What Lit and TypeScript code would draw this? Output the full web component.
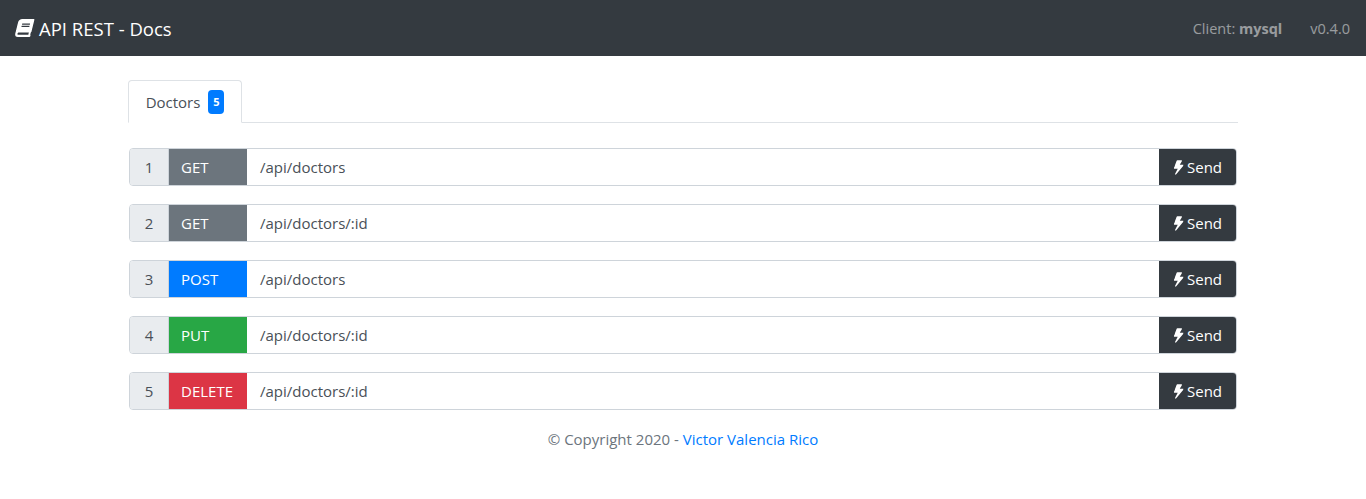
import { LitElement, css, html } from "lit";
import { customElement } from "lit/decorators.js";

const ENDPOINTS = [
  { method: "GET", path: "/api/doctors", color: "get" },
  { method: "GET", path: "/api/doctors/:id", color: "get" },
  { method: "POST", path: "/api/doctors", color: "post" },
  { method: "PUT", path: "/api/doctors/:id", color: "put" },
  { method: "DELETE", path: "/api/doctors/:id", color: "delete" },
];

const bookIcon = html`<svg class="book" viewBox="0 0 448 512" fill="currentColor">
  <path d="M448 360V24c0-13.3-10.7-24-24-24H96C43 0 0 43 0 96v320c0 53 43 96 96 96h328c13.3 0 24-10.7 24-24v-16c0-7.5-3.5-14.3-8.9-18.7-4.2-15.4-4.2-59.3 0-74.7 5.4-4.3 8.9-11.1 8.9-18.6zM128 134c0-3.3 2.7-6 6-6h212c3.3 0 6 2.7 6 6v20c0 3.3-2.7 6-6 6H134c-3.3 0-6-2.7-6-6v-20zm0 64c0-3.3 2.7-6 6-6h212c3.3 0 6 2.7 6 6v20c0 3.3-2.7 6-6 6H134c-3.3 0-6-2.7-6-6v-20zm253.4 250H96c-17.7 0-32-14.3-32-32 0-17.6 14.4-32 32-32h285.4c-1.9 17.1-1.9 46.9 0 64z"></path>
</svg>`;

const boltIcon = html`<svg class="bolt" viewBox="0 0 320 512" fill="currentColor">
  <path d="M296 160H180.6l42.6-129.8C227.2 15 215.7 0 200 0H56C44 0 33.8 8.9 32.2 20.8l-32 240C-2.7 278.7 11.2 296 24 296h118.7L96.6 482.5c-3.6 15.2 8 29.5 23.3 29.5 8.4 0 16.4-4.4 20.8-12l176-304c9.3-15.9-2.2-36-20.7-36z"></path>
</svg>`;

@customElement("app-root")
export class AppRoot extends LitElement {
  render() {
    return html`
      <nav class="navbar">
        <div class="brand">${bookIcon}<span>API REST - Docs</span></div>
        <div class="nav-right">
          <span>Client: <b>mysql</b></span>
          <span>v0.4.0</span>
        </div>
      </nav>
      <main class="container">
        <div class="tabs">
          <div class="tab">Doctors <span class="badge">5</span></div>
        </div>
        <div class="rows">
          ${ENDPOINTS.map(
            (e, i) => html`
              <div class="row">
                <div class="num">${i + 1}</div>
                <div class="method ${e.color}">${e.method}</div>
                <div class="path">${e.path}</div>
                <button class="send">${boltIcon}<span>Send</span></button>
              </div>
            `
          )}
        </div>
        <footer class="footer">
          © Copyright 2020 - <a href="#">Victor Valencia Rico</a>
        </footer>
      </main>
    `;
  }

  static styles = css`
    :host {
      display: block;
      font-family: "Open Sans", "Noto Sans", sans-serif;
      font-size: 15px;
      color: #495057;
      background: #fff;
    }
    .navbar {
      height: 56px;
      box-sizing: border-box;
      background: #343a40;
      display: flex;
      align-items: center;
      justify-content: space-between;
      padding: 0 16px;
    }
    .brand {
      display: flex;
      align-items: center;
      gap: 6px;
      color: #fff;
      font-size: 18.5px;
    }
    .book {
      width: 17px;
      height: 18px;
      transform: skewX(-14deg);
    }
    .nav-right {
      display: flex;
      gap: 28px;
      color: rgba(255, 255, 255, 0.5);
      font-size: 14.5px;
    }
    .nav-right b {
      font-weight: 700;
    }
    .container {
      width: 1110px;
      margin: 0 auto;
      padding-top: 24px;
    }
    .tabs {
      display: flex;
      height: 43px;
      box-sizing: border-box;
      border-bottom: 1px solid #dee2e6;
    }
    .tab {
      height: 43px;
      box-sizing: border-box;
      width: 114px;
      display: flex;
      align-items: center;
      justify-content: center;
      gap: 8px;
      background: #fff;
      border: 1px solid #dee2e6;
      border-bottom-color: #fff;
      border-radius: 4px 4px 0 0;
    }
    .badge {
      display: inline-flex;
      align-items: center;
      justify-content: center;
      width: 16px;
      height: 24px;
      border-radius: 4px;
      background: #007bff;
      color: #fff;
      font-size: 11px;
      font-weight: 700;
    }
    .rows {
      display: flex;
      flex-direction: column;
      gap: 18px;
      margin: 25px 1px 0;
    }
    .row {
      display: flex;
      height: 38px;
      box-sizing: border-box;
      border: 1px solid #ced4da;
      border-radius: 4px;
      overflow: hidden;
      background: #fff;
    }
    .num {
      width: 39px;
      background: #e9ecef;
      border-right: 1px solid #ced4da;
      box-sizing: border-box;
      display: flex;
      align-items: center;
      justify-content: center;
    }
    .method {
      width: 78px;
      box-sizing: border-box;
      padding-left: 12px;
      display: flex;
      align-items: center;
      color: #fff;
    }
    .get {
      background: #6c757d;
    }
    .post {
      background: #007bff;
    }
    .put {
      background: #28a745;
    }
    .delete {
      background: #dc3545;
    }
    .path {
      flex: 1;
      padding-left: 13px;
      display: flex;
      align-items: center;
    }
    .send {
      width: 78px;
      margin: -1px -1px -1px 0;
      border: 0;
      background: #343a40;
      color: #fff;
      font: inherit;
      display: flex;
      align-items: center;
      justify-content: center;
      gap: 4px;
      padding: 0;
    }
    .bolt {
      width: 9px;
      height: 15px;
      transform: skewX(-14deg);
    }
    .footer {
      margin-top: 19px;
      text-align: center;
      color: #6c757d;
      font-size: 15px;
    }
    .footer a {
      color: #007bff;
      text-decoration: none;
    }
  `;
}
